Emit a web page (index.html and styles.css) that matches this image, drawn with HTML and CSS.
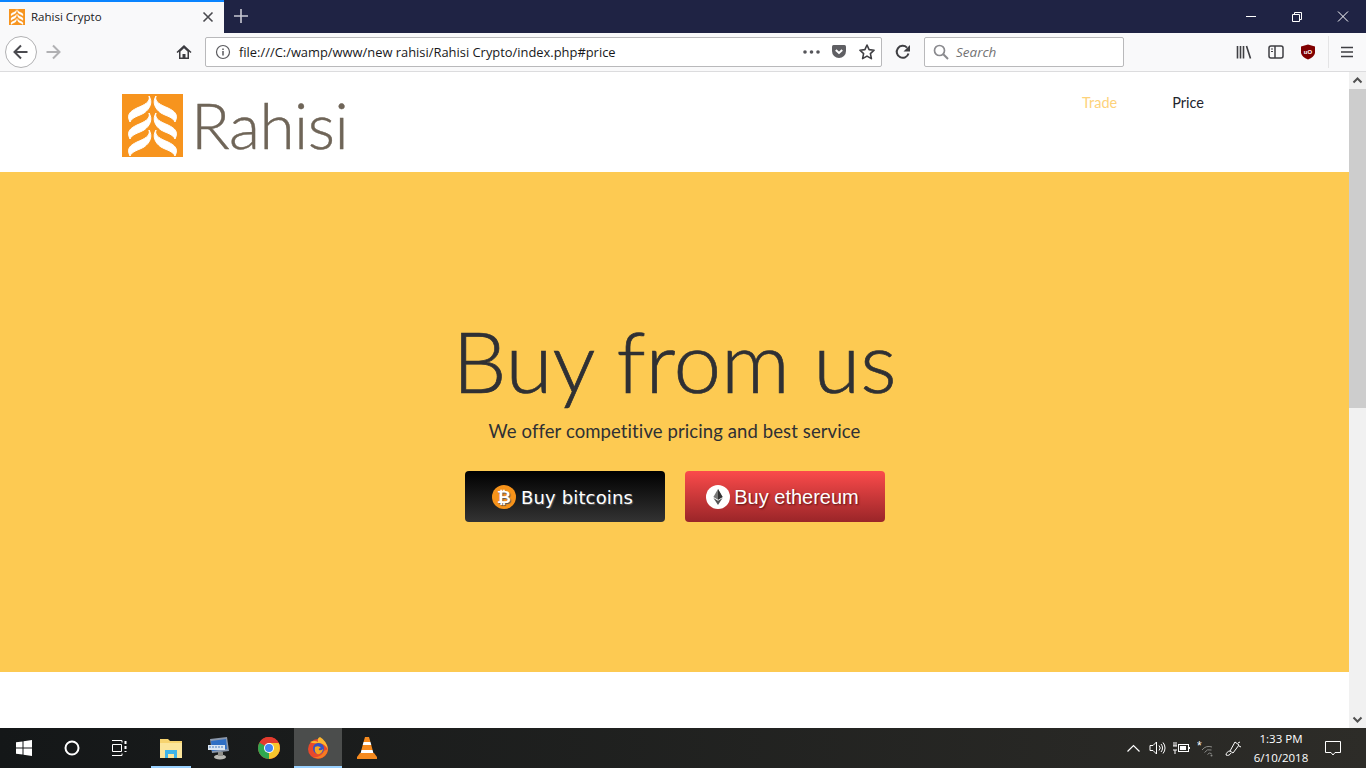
FILE: index.html
```html
<!DOCTYPE html>
<html lang="en">
<head>
<meta charset="utf-8">
<title>Rahisi Crypto</title>
<link rel="stylesheet" href="styles.css">
</head>
<body>
<svg class="defs" width="0" height="0" aria-hidden="true">
  <symbol id="sprig" viewBox="0 0 61 63">
    <g fill="#fff" stroke="#fff" stroke-width="1">
      <g id="leaves">
        <path id="leaf" d="M27 2C29 8 22 11 15 14C9 17 4 20 8 28C10 23 17 22 22 19C28 15 31 8 27 2Z"/>
        <use href="#leaf" y="17"/>
        <use href="#leaf" y="34"/>
      </g>
      <use href="#leaves" transform="matrix(-1 0 0 1 61 0)"/>
    </g>
  </symbol>
</svg>

<div class="browser">
  <div class="titlebar">
    <div class="tab">
      <span class="favicon"><svg width="16" height="16" viewBox="0 0 61 63"><use href="#sprig"/></svg></span>
      <span class="tab-title">Rahisi Crypto</span>
      <svg class="tab-close" width="12" height="12" viewBox="0 0 12 12"><path d="M1.5 1.5l9 9M10.5 1.5l-9 9" stroke="#4a4a4f" stroke-width="1.6"/></svg>
    </div>
    <svg class="new-tab" width="14" height="14" viewBox="0 0 14 14"><path d="M7 0v14M0 7h14" stroke="#c8c9d2" stroke-width="1.6"/></svg>
    <div class="win-controls">
      <svg width="46" height="33" viewBox="0 0 46 33"><path d="M18 16.500h10" stroke="#fff"/></svg>
      <svg width="46" height="33" viewBox="0 0 46 33"><path d="M18.500 14.500h7v7h-7zM20.500 14.500v-2h7v7h-2" fill="none" stroke="#fff"/></svg>
      <svg width="46" height="33" viewBox="0 0 46 33"><path d="M18 11.500l10 10M28 11.500l-10 10" stroke="#fff"/></svg>
    </div>
  </div>

  <div class="toolbar">
    <button class="back" aria-label="Back"><svg width="16" height="16" viewBox="0 0 16 16"><path d="M1.500 8h13M8 1.500L1.500 8 8 14.500" fill="none" stroke="#4a4a4f" stroke-width="2"/></svg></button>
    <svg class="forward" width="16" height="16" viewBox="0 0 16 16"><path d="M1.500 8h13M8 1.500L14.500 8 8 14.500" fill="none" stroke="#b1b1b3" stroke-width="2"/></svg>
    <svg class="home" width="16" height="16" viewBox="0 0 16 16"><path d="M8 1L.5 8l1 1L3 7.700V15h10V7.700L14.500 9l1-1z" fill="#3c3c40"/><path d="M4.500 7.500L8 4.200l3.500 3.300v6H9.500V10h-3v3.500h-2z" fill="#f9f9fa"/></svg>
    <div class="urlbar">
      <svg width="16" height="16" viewBox="0 0 16 16"><circle cx="8" cy="8" r="6.500" fill="none" stroke="#5a5a5e" stroke-width="1.200"/><path d="M8 7v4.500M8 4.500v1.500" stroke="#5a5a5e" stroke-width="1.500"/></svg>
      <span class="url">file:///C:/wamp/www/new rahisi/Rahisi Crypto/index.php#price</span>
      <svg class="dots" width="17" height="4" viewBox="0 0 17 4"><circle cx="2" cy="2" r="1.800" fill="#55555a"/><circle cx="8.500" cy="2" r="1.800" fill="#55555a"/><circle cx="15" cy="2" r="1.800" fill="#55555a"/></svg>
      <svg class="pocket" width="16" height="16" viewBox="0 0 16 16"><path d="M1 2.500Q1 1 2.500 1h11Q15 1 15 2.500V7a7 7 0 0 1-14 0z" fill="#5f5f63"/><path d="M4.800 6L8 9l3.200-3" fill="none" stroke="#fff" stroke-width="2"/></svg>
      <svg width="18" height="18" viewBox="0 0 18 18"><path d="M9 2l2.100 4.600 5 .6-3.700 3.400 1 5L9 13.100l-4.400 2.500 1-5L1.900 7.200l5-.6z" fill="none" stroke="#3f3f43" stroke-width="1.600" stroke-linejoin="round"/></svg>
    </div>
    <svg class="reload" width="16" height="16" viewBox="0 0 16 16"><path d="M13.500 9.500A6 6 0 1 1 12 3.600" fill="none" stroke="#3f3f43" stroke-width="2"/><path d="M15 1v6.500H8.500z" fill="#3f3f43"/></svg>
    <div class="searchbar">
      <svg width="16" height="16" viewBox="0 0 16 16"><circle cx="6.500" cy="6.500" r="5" fill="none" stroke="#8a8a8e" stroke-width="1.700"/><path d="M10.300 10.300L15 15" stroke="#8a8a8e" stroke-width="2"/></svg>
      <span class="search-label">Search</span>
    </div>
    <div class="tools">
      <svg width="16" height="16" viewBox="0 0 16 16"><path d="M1.500 2v12.500M4.500 2v12.500M7.500 2v12.500M10.500 2l4 12.500" fill="none" stroke="#3f3f43" stroke-width="1.600"/></svg>
      <svg width="16" height="16" viewBox="0 0 16 16"><rect x="1" y="2" width="14" height="12" rx="2" fill="none" stroke="#3f3f43" stroke-width="1.500"/><path d="M7 2v12" stroke="#3f3f43" stroke-width="1.500"/><path d="M3 5h2M3 7.500h2" stroke="#3f3f43"/></svg>
      <svg width="16" height="16" viewBox="0 0 16 16"><path d="M8 .5L15 2.500V9Q14 13 8 15.500 2 13 1 9V2.500z" fill="#800000"/><text x="8" y="9.500" class="ublock">uO</text></svg>
      <span class="tool-sep"></span>
      <svg width="14" height="14" viewBox="0 0 14 14"><path d="M1 2.500h12M1 7h12M1 11.500h12" stroke="#3f3f43" stroke-width="1.700"/></svg>
    </div>
  </div>

  <div class="viewport">
    <main class="page">
      <header class="site-header">
        <a class="logo" href="#">
          <svg class="logo-mark" width="61" height="63" viewBox="0 0 61 63"><rect width="61" height="63" fill="#f7941e"/><use href="#sprig"/></svg>
          <span class="logo-word">Rahisi</span>
        </a>
        <nav class="site-nav">
          <a class="nav-trade" href="#">Trade</a>
          <a class="nav-price" href="#">Price</a>
        </nav>
      </header>
      <section class="hero">
        <h1>Buy from us</h1>
        <p>We offer competitive pricing and best service</p>
        <div class="hero-actions">
          <a class="buy buy-btc" href="#">
            <svg width="24" height="24" viewBox="0 0 24 24"><circle cx="12" cy="12" r="12" fill="#f7931a"/><text x="12" y="18" class="coin-b">₿</text></svg>
            <span>Buy bitcoins</span>
          </a>
          <a class="buy buy-eth" href="#">
            <svg width="24" height="24" viewBox="0 0 24 24"><circle cx="12" cy="12" r="12" fill="#fff"/><path d="M12 4l-4.600 8L12 14.700 16.600 12z" fill="#777"/><path d="M12 4v10.700L16.600 12z" fill="#333"/><path d="M7.400 13L12 20l4.600-7L12 15.700z" fill="#555"/></svg>
            <span>Buy ethereum</span>
          </a>
        </div>
      </section>
      <div class="page-rest"></div>
    </main>
    <div class="scrollbar">
      <svg class="sb-arrow" width="17" height="17" viewBox="0 0 17 17"><path d="M4.500 10.500l4-4 4 4" fill="none" stroke="#505050" stroke-width="2"/></svg>
      <div class="sb-track"><div class="sb-thumb"></div></div>
      <svg class="sb-arrow" width="17" height="17" viewBox="0 0 17 17"><path d="M4.500 6.500l4 4 4-4" fill="none" stroke="#505050" stroke-width="2"/></svg>
    </div>
  </div>
</div>

<footer class="taskbar">
  <div class="tb-item"><svg width="16" height="16" viewBox="0 0 16 16"><path d="M0 2.300L6.500 1.400V7.500H0zM7.500 1.200L16 0V7.500H7.500zM0 8.500H6.500V14.600L0 13.700zM7.500 8.500H16V16L7.500 14.800z" fill="#fff"/></svg></div>
  <div class="tb-item"><svg width="16" height="16" viewBox="0 0 16 16"><circle cx="8" cy="8" r="6.500" fill="none" stroke="#fff" stroke-width="2"/></svg></div>
  <div class="tb-item tb-taskview"><svg width="16" height="16" viewBox="0 0 16 16"><path d="M1 .5h10v2M1 15.500h10v-2" fill="none" stroke="#fff"/><path d="M1.500 4.500h9v7h-9z" fill="none" stroke="#fff"/><path d="M14.500 1v3M14.500 6v3M14.500 11v1" stroke="#fff" stroke-width="2"/></svg></div>
  <div class="tb-item tb-open"><svg width="22" height="20" viewBox="0 0 22 20"><path d="M0 1h8l2 2h12v17H0z" fill="#f6d36f"/><path d="M0 5h22v15H0z" fill="#fbe59b"/><path d="M5 20v-8h12v8h-3v-4H8v4z" fill="#3fb4e8"/></svg></div>
  <div class="tb-item"><svg width="24" height="24" viewBox="0 0 24 24"><path d="M3 3l17-2 2 14-17 2z" fill="#8a97ab"/><path d="M4 5l15-2 1 10-15 2z" fill="#2f6fc4"/><path d="M1 9h17v5H1z" fill="#dbe6f2"/><path d="M2 11h15" stroke="#4b7fbf" stroke-dasharray="2 1"/><ellipse cx="13" cy="21" rx="6" ry="2.500" fill="#b9b9b4"/><path d="M11 16h5v4h-5z" fill="#8f8f8a"/></svg></div>
  <div class="tb-item tb-chrome"><svg width="22" height="22" viewBox="0 0 22 22"><circle cx="11" cy="11" r="11" fill="#e33b2e"/><path d="M11 11L1.500 5.500A11 11 0 0 0 11 22z" fill="#2fa84f"/><path d="M11 0a11 11 0 0 1 9.500 16.500L11 11 1.500 5.500A11 11 0 0 1 11 0z" fill="#e33b2e"/><path d="M11 6h9.700A11 11 0 0 1 11 22z" fill="#f8c52c"/><circle cx="11" cy="11" r="5" fill="#fff"/><circle cx="11" cy="11" r="4" fill="#4285f4"/></svg></div>
  <div class="tb-item tb-active"><svg width="22" height="22" viewBox="0 0 22 22"><circle cx="11" cy="12" r="10" fill="#e8492b"/><path d="M3 5Q8 3 11 5Q10 1 13 0Q20 4 21 13Q18 6 11 6Q6 7 3 5z" fill="#fdb62f"/><path d="M21 12A10 10 0 0 1 6 20Q14 21 17 14z" fill="#f57c22"/><circle cx="11.500" cy="11.500" r="5.500" fill="#3553c4"/><path d="M8 10Q12 8 14 11Q11 11 12 13Q14 14 16 12Q15 18 10 17Q7 15 8 10z" fill="#f6a623"/></svg></div>
  <div class="tb-item tb-vlc"><svg width="20" height="22" viewBox="0 0 20 22"><path d="M8 0h4l1.500 5h-7zM5.700 8h8.600l1.300 5H4.400z" fill="#f58a1f"/><path d="M6.500 5h7l.8 3H5.700zM4.400 13h11.200l1 4H3.400z" fill="#fff"/><path d="M3 16h14l3 4v2H0v-2z" fill="#f58a1f"/></svg></div>
  <div class="tray">
    <svg class="tray-up" width="13" height="8" viewBox="0 0 13 8"><path d="M.5 7.500l6-6 6 6" fill="none" stroke="#fff" stroke-width="1.200"/></svg>
    <svg width="17" height="14" viewBox="0 0 17 14"><path d="M1 4.500h3L7.500 1v12L4 9.500H1z" fill="none" stroke="#fff"/><path d="M10 4.500a3.500 3.500 0 0 1 0 5M12 3a6 6 0 0 1 0 8M14 1.500a8.500 8.500 0 0 1 0 11" fill="none" stroke="#fff"/></svg>
    <svg width="17" height="12" viewBox="0 0 17 12"><rect x="5.500" y="2.500" width="10" height="7" fill="none" stroke="#fff"/><path d="M7 4h6v4H7zM16 5h1v2h-1z" fill="#fff"/><path d="M0 4h4M0 8h4M1 0v4M3 0v4M2 8v4" stroke="#fff"/></svg>
    <svg width="17" height="18" viewBox="0 0 17 18"><text x="0" y="11" class="tray-star">*</text><path d="M5 11a9 9 0 0 1 10-3M7.500 13.500a6 6 0 0 1 7-2.500M10.500 15.500a3 3 0 0 1 4-1" fill="none" stroke="#8b8b88"/><circle cx="14.500" cy="16.500" r="1" fill="#8b8b88"/></svg>
    <svg class="tray-pen" width="17" height="17" viewBox="0 0 17 17"><path d="M10 2l4 3-6 8-3-2z" fill="none" stroke="#fff"/><path d="M5 11c-2 0-4 2-4 4 2 1 4 0 5-2M13 3l2-1M14 6l2 1" fill="none" stroke="#fff"/></svg>
    <div class="clock"><span>1:33 PM</span><span>6/10/2018</span></div>
    <svg class="notif" width="16" height="15" viewBox="0 0 16 15"><path d="M.5.500h15v11H10l-2 2.500-2-2.500H.5z" fill="none" stroke="#fff"/></svg>
  </div>
</footer>
</body>
</html>
```
FILE: styles.css
```css
* { box-sizing: border-box; }
html, body { margin: 0; height: 100%; overflow: hidden; }
body { display: flex; flex-direction: column; height: 768px; font-family: "Open Sans", "Liberation Sans", sans-serif; background: #fff; }
.defs { display: block; height: 0; }
svg { display: block; flex: none; }
a { text-decoration: none; }

.browser { flex: 1; display: flex; flex-direction: column; min-height: 0; }

.titlebar { height: 33px; flex: none; display: flex; align-items: center; background: #1f2344; }
.tab { width: 224px; height: 33px; display: flex; align-items: center; padding: 0 10px 2px 9px; background: #f9f9fa; border-top: 2px solid #0a84ff; }
.favicon { width: 16px; height: 16px; background: #f7941e; flex: none; }
.tab-title { flex: 1; margin-left: 6px; font-size: 11.500px; color: #18181a; white-space: nowrap; }
.new-tab { margin: 0 0 1px 10px; }
.win-controls { margin-left: auto; display: flex; }
.win-controls svg { width: 46px; }

.toolbar { height: 39px; flex: none; display: flex; align-items: center; background: #f9f9fa; border-bottom: 1px solid #dcdcde; padding: 0 0 1px 5px; }
.back { width: 32px; height: 32px; padding: 0; border: 1px solid #b1b1b3; border-radius: 50%; background: #fff; display: flex; align-items: center; justify-content: center; }
.forward { margin-left: 8px; }
.home { margin-left: 115px; }
.urlbar { width: 677px; height: 30px; margin-left: 13px; padding: 0 5px 0 9px; display: flex; align-items: center; background: #fff; border: 1px solid #b9b9bb; border-radius: 2px; }
.url { flex: 1; margin-left: 8px; padding-top: 1px; font-size: 12.900px; color: #18181a; white-space: nowrap; }
.dots { margin-right: 11px; }
.pocket { margin-right: 11px; }
.reload { margin-left: 13px; }
.searchbar { width: 200px; height: 30px; margin-left: 13px; padding-left: 8px; display: flex; align-items: center; background: #fff; border: 1px solid #b9b9bb; border-radius: 2px; }
.search-label { margin-left: 7px; padding-top: 1px; font-size: 13.500px; font-style: italic; color: #737373; }
.tools { margin-left: 112px; display: flex; align-items: center; gap: 16px; }
.ublock { font: bold 6px "Liberation Sans", sans-serif; fill: #fff; text-anchor: middle; }
.tool-sep { width: 1px; height: 32px; margin: 0 -5px 0 -4px; background: #e4e4e5; }

.viewport { flex: 1; min-height: 0; display: flex; }
.page { flex: 1; min-width: 0; display: flex; flex-direction: column; background: #fff; }
.site-header { height: 100px; flex: none; display: flex; justify-content: space-between; padding: 22px 145px 0 122px; }
.logo { display: flex; align-items: flex-start; gap: 8px; }
.logo-word { font-family: Lato, sans-serif; font-weight: 300; font-size: 64px; line-height: 62px; color: #6f6558; letter-spacing: -.5px; -webkit-text-stroke: .4px #6f6558; }
.site-nav { display: flex; gap: 55px; font-family: Lato, sans-serif; font-size: 14.500px; line-height: 18px; }
.nav-trade { color: #fdd27a; }
.nav-price { color: #23252e; }

.hero { height: 500px; flex: none; display: flex; flex-direction: column; align-items: center; padding-top: 138px; background: #fdca52; color: #2f3034; }
.hero h1 { margin: 0; font-family: Lato, sans-serif; font-weight: 300; font-size: 85.500px; line-height: 100px; -webkit-text-stroke: .7px #2f3034; }
.hero p { margin: 9px 0 0; font-family: Lato, sans-serif; font-size: 18.500px; letter-spacing: .1px; line-height: 24px; }
.hero-actions { display: flex; gap: 20px; margin-top: 28px; }
.buy { width: 200px; height: 51px; display: flex; align-items: center; justify-content: center; gap: 4px; padding-right: 4px; border-radius: 4px; color: #fff; font-size: 20px; }
.buy span { padding-top: 2px; }
.buy-btc { background: linear-gradient(#000, #333); font-family: "DejaVu Sans", sans-serif; font-size: 18px; gap: 5px; letter-spacing: .15px; text-shadow: 1px 1px 1px #555; }
.buy-eth { background: linear-gradient(#fb4b4b, #9a2528); font-family: "Liberation Sans", sans-serif; text-shadow: 1px 1px 2px #5c1214; }
.coin-b { font: bold 17px "DejaVu Sans", sans-serif; fill: #fff; text-anchor: middle; }
.page-rest { flex: 1; background: #fff; }

.scrollbar { width: 17px; flex: none; display: flex; flex-direction: column; background: #f1f1f1; }
.sb-track { flex: 1; min-height: 0; }
.sb-thumb { height: 319px; background: #cdcdcd; }

.taskbar { height: 40px; flex: none; display: flex; align-items: stretch; background: linear-gradient(90deg, #141718, #2d2c28); }
.tb-item { width: 48px; display: flex; align-items: center; justify-content: center; }
.tb-taskview svg { margin-left: -2px; }
.tb-open { margin-left: 3px; background: linear-gradient(#99d1ff, #99d1ff) center bottom / 40px 2px no-repeat; }
.tb-chrome { margin-left: 2px; }
.tb-active { margin-left: 1px; background: #4b4d4c; box-shadow: inset 0 -2px 0 #99d1ff; }
.tb-vlc { margin-left: 1px; }
.tray { margin-left: auto; display: flex; align-items: center; gap: 7px; padding-right: 25px; color: #fff; }
.tray-up { margin-right: 2px; }
.tray-star { font: 12px "Liberation Sans", sans-serif; fill: #fff; }
.tray-pen { margin-left: 4px; }
.clock { width: 60px; margin-left: 2px; display: flex; flex-direction: column; align-items: center; font-size: 11.500px; white-space: nowrap; }
.clock span { line-height: 19px; }
.notif { margin-left: 7px; }
```
